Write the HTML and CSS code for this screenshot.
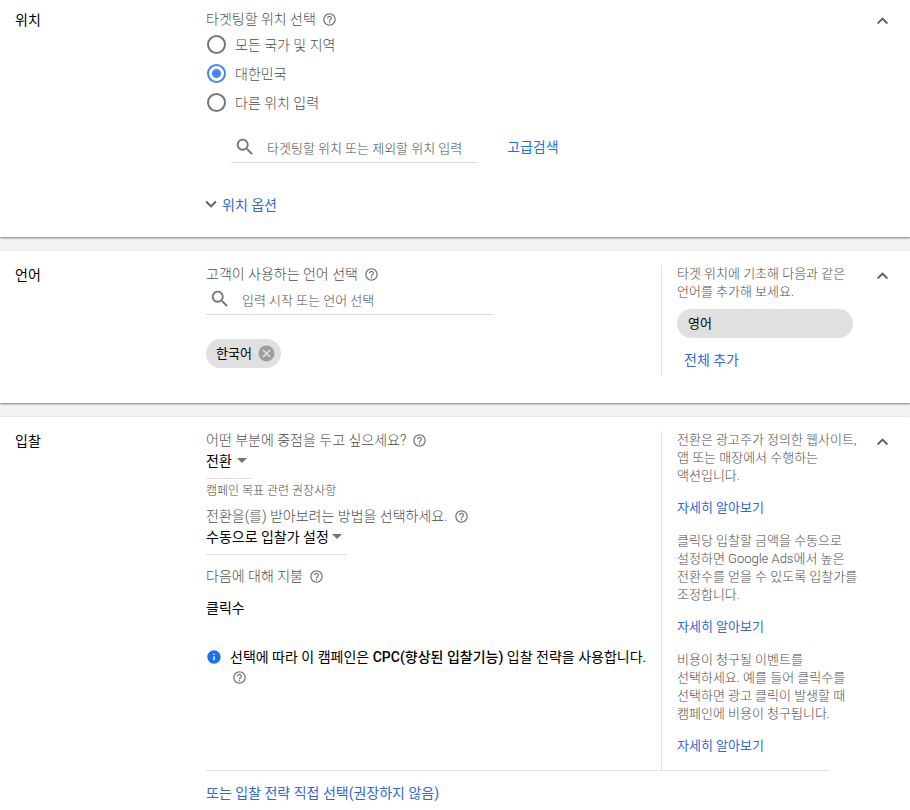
FILE: index.html
```html
<!DOCTYPE html>
<html lang="ko">
<head>
  <meta charset="UTF-8">
  <meta name="viewport" content="width=device-width, initial-scale=1.0">
  <title>캠페인 설정</title>
  <link rel="stylesheet" href="styles.css">
</head>
<body>
  <!-- 공용 아이콘 -->
  <svg class="sprite" aria-hidden="true">
    <symbol id="icon-help" viewBox="0 0 24 24">
      <path d="M11 18h2v-2h-2v2zm1-16C6.480 2 2 6.480 2 12s4.480 10 10 10 10-4.480 10-10S17.520 2 12 2zm0 18c-4.410 0-8-3.590-8-8s3.590-8 8-8 8 3.590 8 8-3.590 8-8 8zm0-14c-2.210 0-4 1.790-4 4h2c0-1.100.9-2 2-2s2 .9 2 2c0 2-3 1.750-3 5h2c0-2.250 3-2.500 3-5 0-2.210-1.790-4-4-4z"/>
    </symbol>
    <symbol id="icon-search" viewBox="0 0 24 24">
      <path d="M15.500 14h-.79l-.28-.27C15.410 12.590 16 11.110 16 9.500 16 5.910 13.090 3 9.500 3S3 5.910 3 9.500 5.910 16 9.500 16c1.610 0 3.090-.59 4.230-1.570l.27.28v.79l5 4.990L20.490 19l-4.990-5zm-6 0C7.010 14 5 11.990 5 9.500S7.010 5 9.500 5 14 7.010 14 9.500 11.990 14 9.500 14z"/>
    </symbol>
    <symbol id="icon-up" viewBox="0 0 24 24">
      <path d="M12 8l-6 6 1.410 1.410L12 10.830l4.590 4.580L18 14z"/>
    </symbol>
    <symbol id="icon-down" viewBox="0 0 24 24">
      <path d="M16.590 8.590L12 13.170 7.410 8.590 6 10l6 6 6-6z"/>
    </symbol>
    <symbol id="icon-arrow" viewBox="0 0 10 5">
      <path d="M0 0h10L5 5z"/>
    </symbol>
    <symbol id="icon-cancel" viewBox="0 0 24 24">
      <path d="M12 2C6.470 2 2 6.470 2 12s4.470 10 10 10 10-4.470 10-10S17.530 2 12 2zm5 13.590L15.590 17 12 13.410 8.410 17 7 15.590 10.590 12 7 8.410 8.410 7 12 10.590 15.590 7 17 8.410 13.410 12 17 15.590z"/>
    </symbol>
    <symbol id="icon-info" viewBox="0 0 24 24">
      <path d="M12 2C6.480 2 2 6.480 2 12s4.480 10 10 10 10-4.480 10-10S17.520 2 12 2zm1 15h-2v-6h2v6zm0-8h-2V7h2v2z"/>
    </symbol>
  </svg>

  <!-- 위치 -->
  <section class="panel panel-location">
    <h2>위치</h2>
    <div class="content">
      <p class="label">타겟팅할 위치 선택 <svg class="help"><use href="#icon-help"/></svg></p>
      <div class="radios">
        <label><input type="radio" name="location"> <span>모든 국가 및 지역</span></label>
        <label><input type="radio" name="location" checked> <span>대한민국</span></label>
        <label><input type="radio" name="location"> <span>다른 위치 입력</span></label>
      </div>
      <div class="location-search">
        <div class="search">
          <svg><use href="#icon-search"/></svg>
          <input type="text" placeholder="타겟팅할 위치 또는 제외할 위치 입력" aria-label="위치 검색">
        </div>
        <a href="#" class="advanced">고급검색</a>
      </div>
      <a href="#" class="options"><svg><use href="#icon-down"/></svg>위치 옵션</a>
    </div>
    <button class="collapse" aria-label="위치 접기"><svg><use href="#icon-up"/></svg></button>
  </section>

  <!-- 언어 -->
  <section class="panel panel-language">
    <h2>언어</h2>
    <div class="content">
      <p class="label">고객이 사용하는 언어 선택 <svg class="help"><use href="#icon-help"/></svg></p>
      <div class="search">
        <svg><use href="#icon-search"/></svg>
        <input type="text" placeholder="입력 시작 또는 언어 선택" aria-label="언어 검색">
      </div>
      <div class="chip">한국어 <button aria-label="한국어 삭제"><svg><use href="#icon-cancel"/></svg></button></div>
    </div>
    <aside class="side">
      <p>타겟 위치에 기초해 다음과 같은 언어를 추가해 보세요.</p>
      <button class="suggestion">영어</button>
      <a href="#" class="add-all">전체 추가</a>
    </aside>
    <button class="collapse" aria-label="언어 접기"><svg><use href="#icon-up"/></svg></button>
  </section>

  <!-- 입찰 -->
  <section class="panel panel-bidding">
    <h2>입찰</h2>
    <div class="content">
      <p class="label"><span id="focus">어떤 부분에 중점을 두고 싶으세요?</span> <svg class="help"><use href="#icon-help"/></svg></p>
      <div class="dropdown dropdown-short">
        <select aria-labelledby="focus"><option>전환</option></select>
        <svg><use href="#icon-arrow"/></svg>
      </div>
      <p class="hint">캠페인 목표 관련 권장사항</p>
      <p class="label"><span id="method">전환을(를) 받아보려는 방법을 선택하세요.</span> <svg class="help"><use href="#icon-help"/></svg></p>
      <div class="dropdown">
        <select aria-labelledby="method"><option>수동으로 입찰가 설정</option></select>
        <svg><use href="#icon-arrow"/></svg>
      </div>
      <p class="label">다음에 대해 지불 <svg class="help"><use href="#icon-help"/></svg></p>
      <p class="value">클릭수</p>
      <div class="notice">
        <svg class="info"><use href="#icon-info"/></svg>
        <div>
          <p>선택에 따라 이 캠페인은 <b>CPC(향상된 입찰기능)</b> 입찰 전략을 사용합니다.</p>
          <svg class="help"><use href="#icon-help"/></svg>
        </div>
      </div>
    </div>
    <aside class="side">
      <p>전환은 광고주가 정의한 웹사이트, 앱 또는 매장에서 수행하는 액션입니다.</p>
      <a href="#">자세히 알아보기</a>
      <p>클릭당 입찰할 금액을 수동으로 설정하면 Google Ads에서 높은 전환수를 얻을 수 있도록 입찰가를 조정합니다.</p>
      <a href="#">자세히 알아보기</a>
      <p>비용이 청구될 이벤트를 선택하세요. 예를 들어 클릭수를 선택하면 광고 클릭이 발생할 때 캠페인에 비용이 청구됩니다.</p>
      <a href="#">자세히 알아보기</a>
    </aside>
    <button class="collapse" aria-label="입찰 접기"><svg><use href="#icon-up"/></svg></button>
    <div class="direct">
      <a href="#">또는 입찰 전략 직접 선택(권장하지 않음)</a>
    </div>
  </section>
</body>
</html>
```

FILE: styles.css
```css
* {
  box-sizing: border-box;
}

body {
  margin: 0;
  background: #f3f3f3;
  color: #000;
  font-family: Roboto, "Noto Sans CJK KR", sans-serif;
  font-size: 14px;
  line-height: 20px;
  word-break: keep-all;
}

h2, p {
  margin: 0;
  font-size: inherit;
  font-weight: inherit;
}

svg {
  display: block;
  flex: none;
  fill: currentColor;
}

a {
  color: #3367d6;
  font-weight: 400;
  text-decoration: none;
}

button, input, select {
  font: inherit;
  color: inherit;
  border: 0;
  padding: 0;
  margin: 0;
  background: none;
}

button {
  cursor: pointer;
}

.sprite {
  position: absolute;
  width: 0;
  height: 0;
}

/* 패널 */
.panel {
  display: grid;
  grid-template-columns: 191px 1fr 200px 49px;
  margin-bottom: 14px;
  padding: 10px 0 22px 15px;
  background: #fff;
  box-shadow: 0 1px 2px rgba(0, 0, 0, 0.5);
}

.panel-location .content {
  grid-column: 2 / 4;
}

.panel-language,
.panel-bidding {
  padding-top: 14px;
}

.panel-language {
  padding-bottom: 27px;
}

.panel-bidding {
  margin-bottom: 0;
}

.label {
  display: flex;
  align-items: center;
  gap: 6px;
  line-height: 18px;
}

.label,
.radios,
.search,
.side,
.hint {
  color: #4d4d4d;
  font-weight: 300;
}

.help {
  width: 15px;
  height: 15px;
  color: #757575;
}

.collapse {
  justify-self: start;
  align-self: start;
  margin-left: 10px;
}

.collapse svg {
  width: 23px;
  height: 22px;
  color: #616161;
}

/* 라디오 버튼 */
.radios {
  margin-top: 2px;
}

.radios label {
  display: flex;
  align-items: center;
  gap: 8px;
  height: 29px;
}

.radios input {
  appearance: none;
  width: 19px;
  height: 19px;
  margin: 0 1px;
  border: 2px solid #757575;
  border-radius: 50%;
}

.radios input:checked {
  border-color: #4285f4;
  background: radial-gradient(circle, #4285f4 4px, transparent 5px);
}

/* 검색창 */
.search {
  display: flex;
  align-items: center;
  width: 288px;
  height: 32px;
  padding-left: 3px;
  border-bottom: 1px solid #dcdcdc;
}

.search svg {
  width: 22px;
  height: 22px;
  color: #757575;
}

.search input {
  flex: 1;
  min-width: 0;
  margin-left: 11px;
  padding-top: 4px;
  font-size: 13px;
  outline: none;
}

.search input::placeholder {
  color: #4d4d4d;
  opacity: 1;
}

.location-search {
  display: flex;
  align-items: center;
  gap: 29px;
  margin: 14px 0 0 25px;
}

.location-search .search {
  width: 247px;
}

.advanced {
  color: #1a73e8;
}

.options {
  display: flex;
  align-items: center;
  margin-top: 31px;
}

.options svg {
  width: 22px;
  height: 22px;
  margin: -1px 0 0 -6px;
  color: #616161;
}

/* 언어 */
.chip {
  display: inline-flex;
  align-items: center;
  gap: 5px;
  height: 29px;
  margin-top: 24px;
  padding: 0 5px 0 10px;
  border-radius: 15px;
  background: #e0e0e0;
  font-size: 13px;
}

.chip svg {
  width: 19px;
  height: 19px;
  color: #9e9e9e;
}

.side {
  padding-left: 15px;
  border-left: 1px solid #e0e0e0;
  font-size: 13px;
  line-height: 18px;
}

.suggestion {
  display: block;
  width: 176px;
  height: 29px;
  margin: 8px 0 13px;
  padding: 0 11px;
  border-radius: 15px;
  background: #e0e0e0;
  color: #000;
  font-weight: 400;
  text-align: left;
}

.add-all {
  display: block;
  padding: 0 0 7px 7px;
  font-size: 14px;
}

/* 입찰 */
.panel-bidding .side a {
  display: block;
  margin: 14px 0 15px;
}

.dropdown {
  display: grid;
  width: 141px;
  height: 30px;
  margin-bottom: 12px;
  border-bottom: 1px solid #e0e0e0;
}

.dropdown-short {
  width: 46px;
  margin-bottom: 2px;
}

.dropdown select,
.dropdown svg {
  grid-area: 1 / 1;
}

.dropdown select {
  appearance: none;
  width: 100%;
  height: 24px;
}

.dropdown svg {
  justify-self: end;
  width: 10px;
  height: 5px;
  margin: 9px 5px 0 0;
  color: #757575;
  pointer-events: none;
}

.hint {
  margin-bottom: 6px;
  font-size: 12px;
}

.value {
  margin: 13px 0 29px;
}

.notice {
  display: flex;
  gap: 8px;
}

.notice .info {
  width: 16px;
  height: 16px;
  margin-top: 2px;
  color: #1a73e8;
}

.notice .help {
  margin: 3px 2px 0;
}

.notice b {
  font-weight: 500;
}

.direct {
  grid-column: 2 / 4;
  margin-right: 33px;
  padding-top: 12px;
  border-top: 1px solid #e0e0e0;
}
```
